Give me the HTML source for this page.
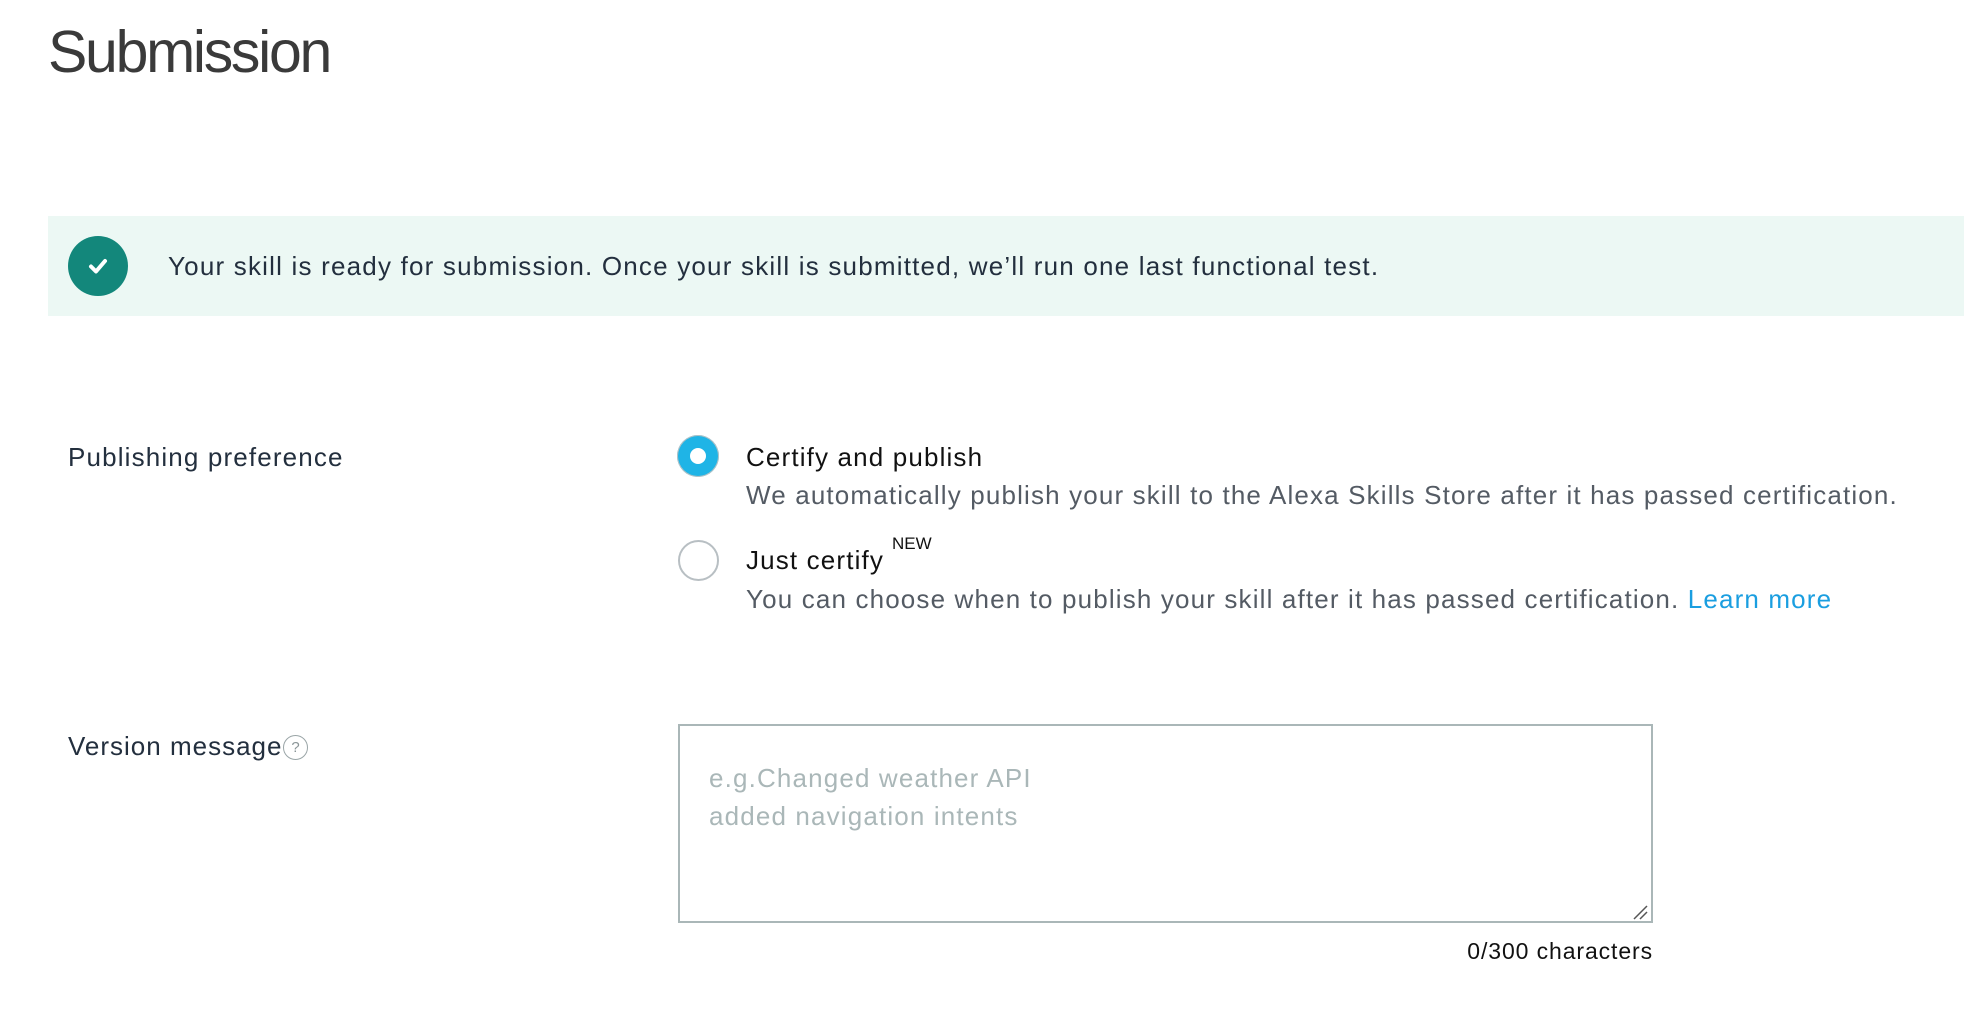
<!DOCTYPE html>
<html><head><meta charset="utf-8"><style>
html,body{margin:0;padding:0;width:1964px;height:1034px;background:#fff;overflow:hidden;font-family:"Liberation Sans",sans-serif;}
.a{position:absolute;white-space:nowrap;line-height:1;}
.t{font-size:26px;letter-spacing:1.15px;}
</style></head><body>
<div class="a" style="left:48px;top:23px;font-size:59px;color:#3a3a3a;letter-spacing:-2.3px;">Submission</div>
<div style="position:absolute;left:48px;top:216px;width:1916px;height:100px;background:#ecf8f4"></div>
<div style="position:absolute;left:68px;top:236px;width:60px;height:60px;border-radius:50%;background:#13877b"></div>
<svg style="position:absolute;left:84px;top:252px" width="28" height="28" viewBox="0 0 28 28"><path d="M7 14.5 L12 19.5 L21 9" fill="none" stroke="#fff" stroke-width="4" stroke-linecap="round" stroke-linejoin="round"/></svg>
<div class="a t" style="left:168px;top:253px;color:#232f3e;letter-spacing:1.2px">Your skill is ready for submission. Once your skill is submitted, we’ll run one last functional test.</div>

<div class="a t" style="left:68px;top:444px;color:#232f3e">Publishing preference</div>
<div style="position:absolute;left:677px;top:435px;width:42px;height:42px;border-radius:50%;background:#1fb4e6;box-shadow:0 0 0 1px #b8c2c4 inset"></div>
<div style="position:absolute;left:690px;top:448px;width:16px;height:16px;border-radius:50%;background:#fff"></div>
<div class="a t" style="left:746px;top:444px;color:#111">Certify and publish</div>
<div class="a t" style="left:746px;top:482px;color:#545b64">We automatically publish your skill to the Alexa Skills Store after it has passed certification.</div>

<div style="position:absolute;left:678px;top:540px;width:37px;height:37px;border-radius:50%;border:2px solid #b8bfc3;background:#fff"></div>
<div class="a t" style="left:746px;top:547px;color:#111">Just certify</div>
<div class="a" style="left:892px;top:535px;font-size:17px;color:#111">NEW</div>
<div class="a t" style="left:746px;top:586px;color:#545b64">You can choose when to publish your skill after it has passed certification. <span style="color:#1a9ee0">Learn more</span></div>

<div class="a t" style="left:68px;top:733px;color:#232f3e;letter-spacing:1.0px">Version message</div>
<div style="position:absolute;left:283px;top:735px;width:25px;height:25px;border-radius:50%;border:1.5px solid #9aa5a7;box-sizing:border-box;font-size:15px;color:#8a9597;text-align:center;line-height:23px">?</div>

<div style="position:absolute;left:678px;top:724px;width:975px;height:199px;border:2px solid #aab7b8;box-sizing:border-box;background:#fff"></div>
<svg style="position:absolute;left:1632px;top:904px" width="16" height="16" viewBox="0 0 16 16"><path d="M2 15 L15 2 M8 15 L15 8" stroke="#555" stroke-width="1.5"/></svg>
<div class="a t" style="left:709px;top:759px;color:#aab7b8;line-height:38px">e.g.Changed weather API<br>added navigation intents</div>
<div class="a" style="right:311px;top:940px;font-size:23px;color:#111;letter-spacing:0.9px">0/300 characters</div>
</body></html>
